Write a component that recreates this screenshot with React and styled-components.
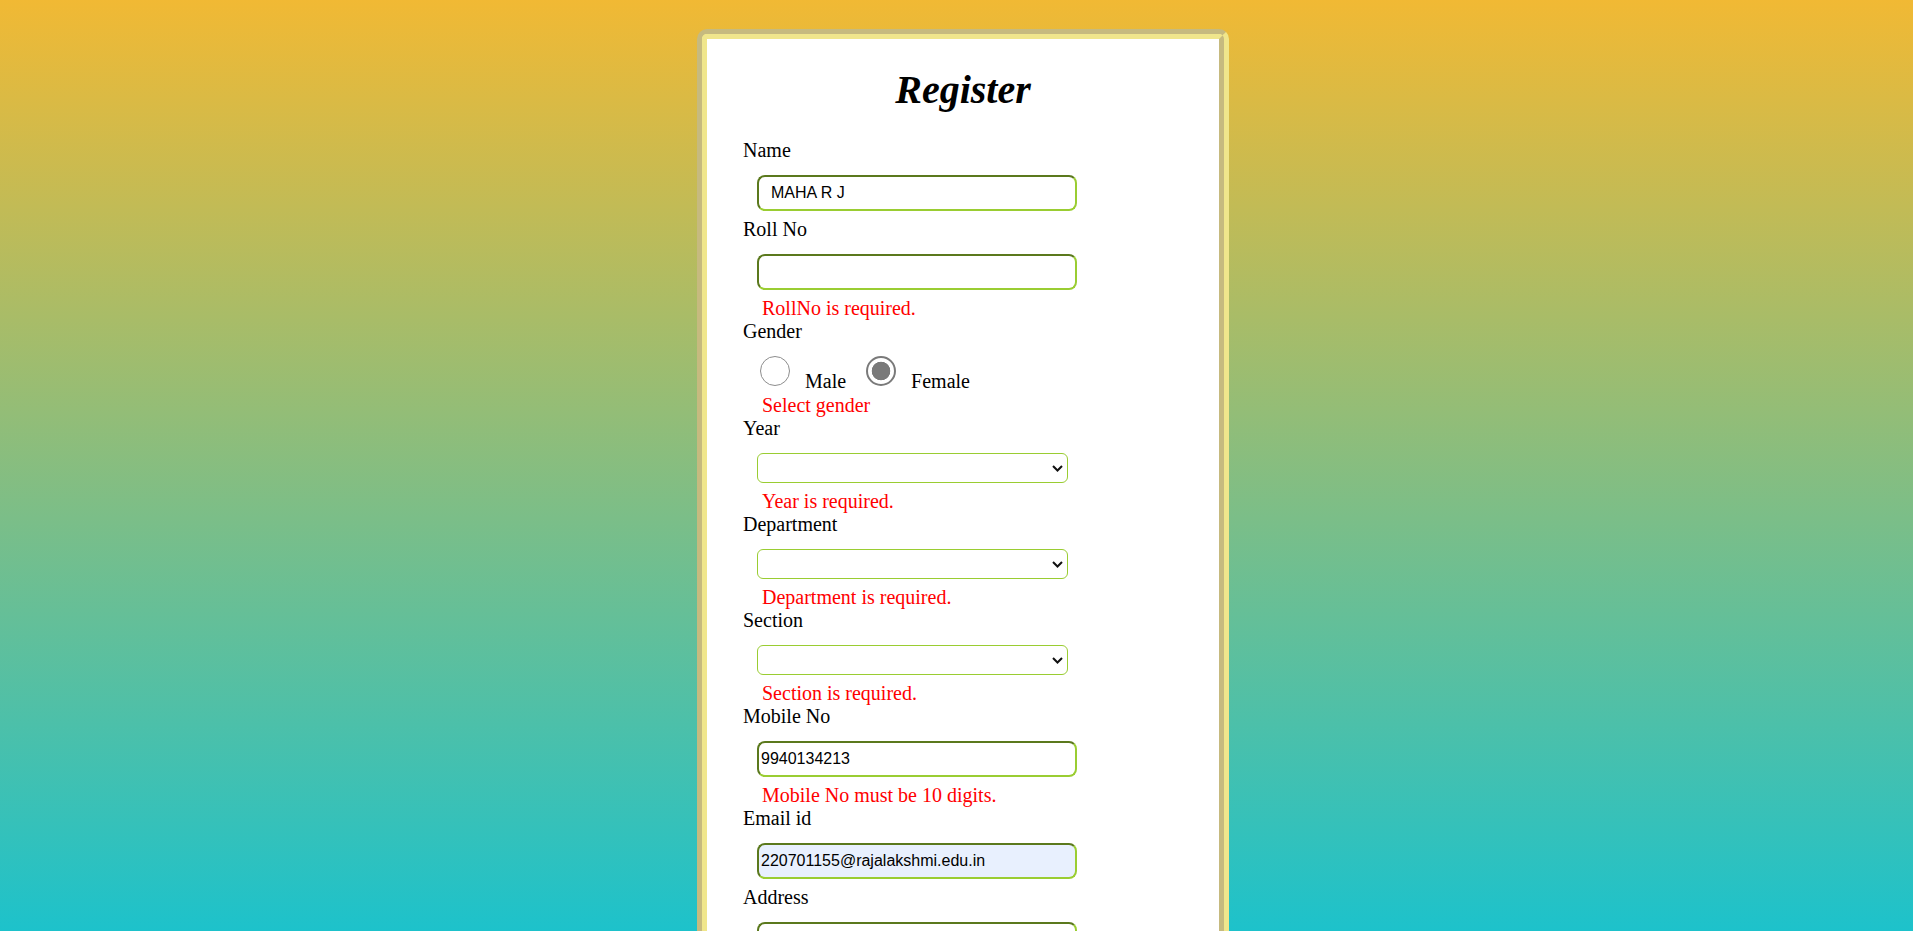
import React from "react";
import styled, { createGlobalStyle } from "styled-components";

const GlobalStyle = createGlobalStyle`
  html, body {
    margin: 0;
    padding: 0;
  }
  body {
    font-family: "Liberation Serif", "Times New Roman", serif;
    background: linear-gradient(to bottom, #f1b934, #1dc2cb) fixed;
    min-height: 100vh;
  }
`;

const Page = styled.div`
  display: flex;
  justify-content: center;
  align-items: flex-start;
  padding: 29px 0 60px 13px;
  min-height: 100vh;
  box-sizing: border-box;
`;

const Card = styled.div`
  width: 532px;
  box-sizing: border-box;
  border: 5px solid;
  border-color: #c6ba7f #f0e68c #f0e68c #c6ba7f;
  border-radius: 10px;
  background: #f0e68c;
`;

const CardBody = styled.form`
  border: 5px solid;
  border-color: #f0e68c #c6ba7f #c6ba7f #f0e68c;
  border-radius: 5px;
  background: #ffffff;
  padding: 3px 36px 48px;
`;

const Title = styled.h1`
  margin: 25px 0 26px;
  text-align: center;
  font-family: "Liberation Serif", "Times New Roman", serif;
  font-size: 40px;
  line-height: 46px;
  font-weight: bold;
  font-style: italic;
  color: #000;
`;

const Label = styled.label`
  display: block;
  font-size: 20px;
  line-height: 23px;
  color: #000;
`;

const TextInput = styled.input`
  display: block;
  box-sizing: border-box;
  width: 320px;
  height: 36px;
  margin: 13px 0 7px 14px;
  padding: 1px ${(p) => p.$pad ?? 2}px;
  border: 2px inset yellowgreen;
  border-radius: 8px;
  background: ${(p) => (p.$filled ? "#e8f0fe" : "#ffffff")};
  font-family: "Liberation Sans", Arial, sans-serif;
  font-size: 16px;
  color: #000;
  outline: none;
`;

const SelectWrap = styled.div`
  position: relative;
  width: 311px;
  margin: 13px 0 7px 14px;
`;

const Select = styled.select`
  appearance: none;
  -webkit-appearance: none;
  display: block;
  box-sizing: border-box;
  width: 100%;
  height: 30px;
  margin: 0;
  padding: 0 24px 0 4px;
  border: 1px solid yellowgreen;
  border-radius: 6px;
  background: #ffffff;
  font-family: "Liberation Sans", Arial, sans-serif;
  font-size: 16px;
  color: #000;
  outline: none;
`;

const Chevron = styled.svg`
  position: absolute;
  right: 5px;
  top: 12px;
  width: 11px;
  height: 7px;
  pointer-events: none;
`;

const ErrorText = styled.span`
  display: block;
  margin-left: 19px;
  font-size: 20px;
  line-height: 23px;
  color: #ff0000;
`;

const RadioRow = styled.div`
  margin: 13px 0 1px 17px;
  font-size: 20px;
  line-height: 23px;
  color: #000;
`;

const RadioOption = styled.label`
  display: inline;
  margin-right: 20px;
`;

const Radio = styled.input`
  appearance: none;
  -webkit-appearance: none;
  display: inline-block;
  vertical-align: 2px;
  width: 30px;
  height: 30px;
  margin: 0 15px 0 0;
  box-sizing: border-box;
  border-radius: 50%;
  border: 1.5px solid #8d8d8d;
  background: #ffffff;

  &:checked {
    border: 2px solid #7a7a7a;
    background: radial-gradient(circle, #7a7a7a 0 9px, #ffffff 9.6px);
  }
`;

const SubmitButton = styled.button`
  display: block;
  margin: 24px auto 0;
  padding: 8px 28px;
  border: 2px solid yellowgreen;
  border-radius: 8px;
  background: #f0e68c;
  font-family: "Liberation Serif", "Times New Roman", serif;
  font-size: 20px;
  color: #000;
`;

function Dropdown({ options }) {
  return (
    <SelectWrap>
      <Select defaultValue="">
        <option value=""></option>
        {options.map((o) => (
          <option key={o} value={o}>
            {o}
          </option>
        ))}
      </Select>
      <Chevron viewBox="0 0 11 7" aria-hidden="true">
        <path d="M1 1 L5.5 5.5 L10 1" fill="none" stroke="#111" strokeWidth="2" />
      </Chevron>
    </SelectWrap>
  );
}

export default function App() {
  return (
    <>
      <GlobalStyle />
      <Page>
        <Card>
          <CardBody onSubmit={(e) => e.preventDefault()}>
            <Title>Register</Title>

            <Label>Name</Label>
            <TextInput $pad={12} defaultValue="MAHA R J" />

            <Label>Roll No</Label>
            <TextInput />
            <ErrorText>RollNo is required.</ErrorText>

            <Label>Gender</Label>
            <RadioRow>
              <RadioOption>
                <Radio type="radio" name="gender" value="male" />Male
              </RadioOption>
              <RadioOption>
                <Radio type="radio" name="gender" value="female" defaultChecked />Female
              </RadioOption>
            </RadioRow>
            <ErrorText>Select gender</ErrorText>

            <Label>Year</Label>
            <Dropdown options={["I", "II", "III", "IV"]} />
            <ErrorText>Year is required.</ErrorText>

            <Label>Department</Label>
            <Dropdown options={["CSE", "IT", "ECE", "EEE"]} />
            <ErrorText>Department is required.</ErrorText>

            <Label>Section</Label>
            <Dropdown options={["A", "B", "C", "D"]} />
            <ErrorText>Section is required.</ErrorText>

            <Label>Mobile No</Label>
            <TextInput defaultValue="9940134213" />
            <ErrorText>Mobile No must be 10 digits.</ErrorText>

            <Label>Email id</Label>
            <TextInput $filled defaultValue="220701155@rajalakshmi.edu.in" />

            <Label>Address</Label>
            <TextInput />

            <SubmitButton type="submit">Submit</SubmitButton>
          </CardBody>
        </Card>
      </Page>
    </>
  );
}
